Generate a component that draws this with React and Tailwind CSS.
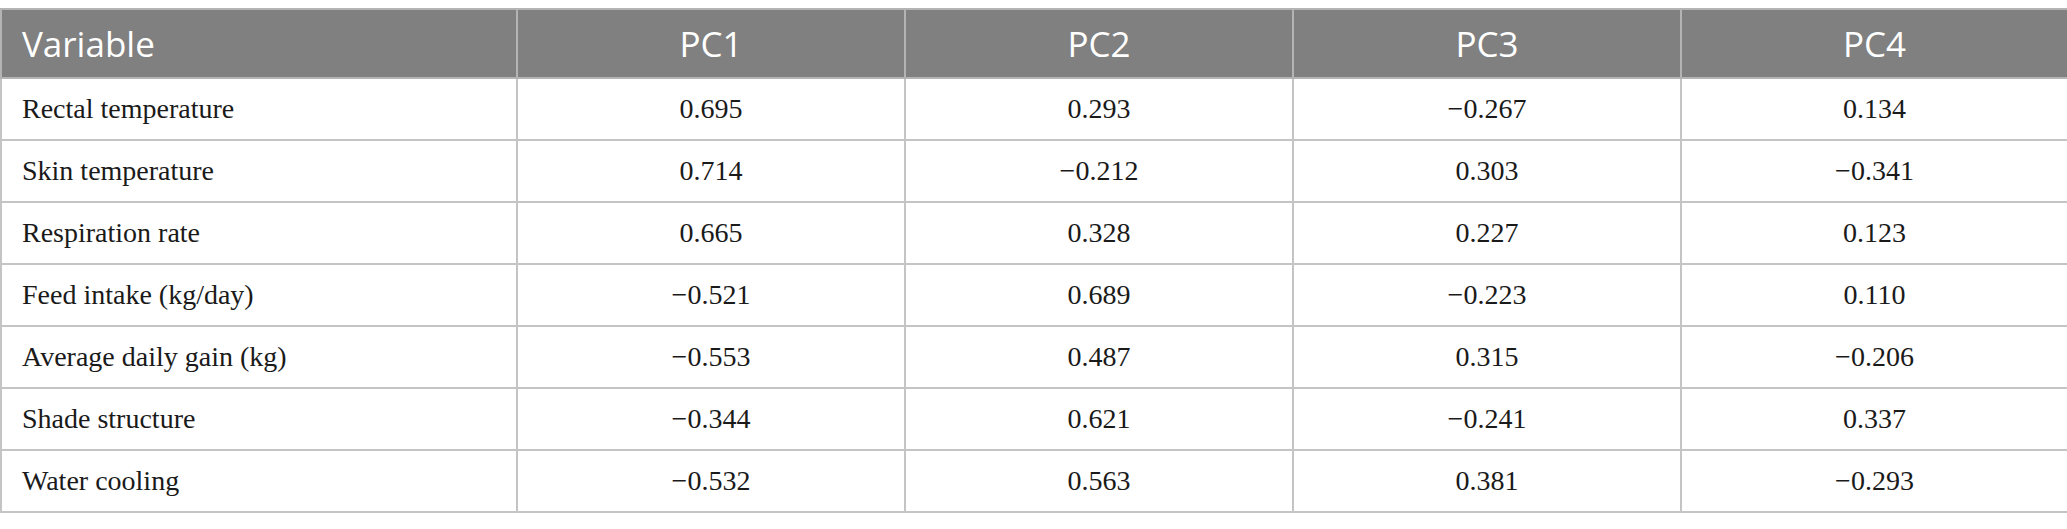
const headers = ["Variable", "PC1", "PC2", "PC3", "PC4"];

const rows = [
  ["Rectal temperature", "0.695", "0.293", "\u22120.267", "0.134"],
  ["Skin temperature", "0.714", "\u22120.212", "0.303", "\u22120.341"],
  ["Respiration rate", "0.665", "0.328", "0.227", "0.123"],
  ["Feed intake (kg/day)", "\u22120.521", "0.689", "\u22120.223", "0.110"],
  ["Average daily gain (kg)", "\u22120.553", "0.487", "0.315", "\u22120.206"],
  ["Shade structure", "\u22120.344", "0.621", "\u22120.241", "0.337"],
  ["Water cooling", "\u22120.532", "0.563", "0.381", "\u22120.293"],
];

export default function App() {
  return (
    <div className="w-[2067px] h-[529px] bg-white pt-2">
      <table className="w-[2067px] border-collapse table-fixed">
        <colgroup>
          <col className="w-[516px]" />
          <col className="w-[388px]" />
          <col className="w-[388px]" />
          <col className="w-[388px]" />
          <col className="w-[387px]" />
        </colgroup>
        <thead>
          <tr className="h-[69px] bg-[#7f807f]">
            {headers.map((h, i) => (
              <th
                key={h}
                className={`border-2 border-[#b4b4b4] font-['Open_Sans',sans-serif] text-[35px] font-normal text-white leading-none ${
                  i === 0 ? "text-left pl-[20px]" : "text-center"
                }`}
              >
                {h}
              </th>
            ))}
          </tr>
        </thead>
        <tbody>
          {rows.map((r) => (
            <tr key={r[0]} className="h-[62px]">
              {r.map((c, i) => (
                <td
                  key={i}
                  className={`border-2 border-[#c4c4c4] font-['Liberation_Serif',serif] text-[28px] text-[#1a1a1a] leading-none ${
                    i === 0 ? "text-left pl-[20px]" : "text-center"
                  }`}
                >
                  {c}
                </td>
              ))}
            </tr>
          ))}
        </tbody>
      </table>
    </div>
  );
}
